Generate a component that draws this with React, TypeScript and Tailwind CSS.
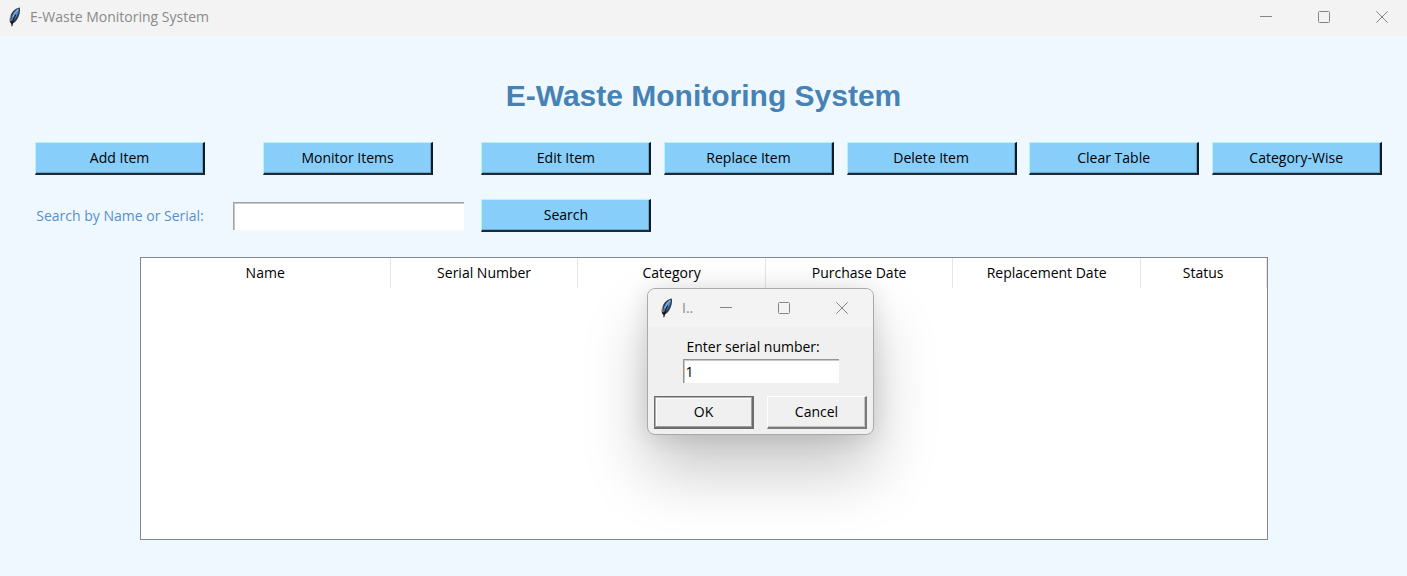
import { useState } from "react";
import type { ReactNode } from "react";

function Feather({ className }: { className: string }) {
  return (
    <svg viewBox="0 0 14 20" className={className} aria-hidden="true">
      <path d="M11.800 .4C8.600 .8 5 3.400 3.200 7c-1.300 2.800-1.900 5.800-1.200 8.600l1.400 1.200c2.600-.4 5-2.800 6.400-5.600 1.700-3.400 2.800-7 2-10.800z" fill="#33373f" />
      <path d="M11 1.500C8.200 2.600 5.800 5 4.400 8.200c-1 2.400-1.400 4.600-1.200 6.600C5.600 13.800 7.600 11.600 9 8.800c1.300-2.600 2.100-4.800 2-7.300z" fill="#4a86cc" />
      <path d="M10.200 2.600C7.800 4.400 6 7 4.900 10" stroke="#86b4e8" strokeWidth="1.300" fill="none" />
      <path d="M2.900 8.200c-.7 2-1 3.800-.7 5.800" stroke="#a8a8a8" strokeWidth=".9" fill="none" />
      <path d="M7.600 7.600C5.600 10.800 4.300 14.600 3.800 19.200" stroke="#15171c" strokeWidth="1.100" fill="none" />
      <path d="M2.200 14.200l3.400 .4-1.600 3.400z" fill="#15171c" />
    </svg>
  );
}

function WindowControls({ label, className }: { label: string; className: string }) {
  const button = "flex h-full w-[58px] items-center justify-center text-[#858585]";
  return (
    <div className={`flex h-full shrink-0 ${className}`}>
      <button type="button" aria-label={`Minimize ${label}`} className={button}>
        <svg viewBox="0 0 12 12" className="size-3">
          <path d="M0 5.500h12" stroke="currentColor" />
        </svg>
      </button>
      <button type="button" aria-label={`Maximize ${label}`} className={button}>
        <svg viewBox="0 0 12 12" className="size-3">
          <rect x=".5" y=".5" width="11" height="11" rx="1" fill="none" stroke="currentColor" />
        </svg>
      </button>
      <button type="button" aria-label={`Close ${label}`} className={button}>
        <svg viewBox="0 0 12 12" className="size-3">
          <path d="M.3 .3l11.400 11.400M11.700 .3L.3 11.700" stroke="currentColor" />
        </svg>
      </button>
    </div>
  );
}

function ActionButton({ children }: { children: ReactNode }) {
  return (
    <button
      type="button"
      className="h-[33px] w-[170px] border-t border-r-2 border-b-2 border-l border-t-[#b4f4ff] border-r-[#101c24] border-b-[#1c2b35] border-l-[#b4f4ff] bg-[#87cefa] text-center text-black shadow-[inset_-1px_-1px_0_#6aa5cc]"
    >
      {children}
    </button>
  );
}

const actions = ["Add Item", "Monitor Items", "Edit Item", "Replace Item", "Delete Item", "Clear Table", "Category-Wise"];

const columns = [
  { name: "Name", width: "w-[22.200%]" },
  { name: "Serial Number", width: "w-[16.660%]" },
  { name: "Category", width: "w-[16.660%]" },
  { name: "Purchase Date", width: "w-[16.660%]" },
  { name: "Replacement Date", width: "w-[16.660%]" },
  { name: "Status", width: "w-[11.160%]" },
];

function SerialDialog() {
  const [serial, setSerial] = useState("1");
  return (
    <div
      role="dialog"
      aria-labelledby="dialog-title"
      className="absolute top-[288px] left-[647px] w-[227px] overflow-hidden rounded-lg border border-[#a9a9a9] bg-[#f0f0f0] shadow-[0_36px_64px_rgba(0,0,0,0.22),0_2px_24px_rgba(0,0,0,0.12)]"
    >
      <div className="flex h-[38px] items-center bg-[#f3f3f3] pl-3">
        <Feather className="h-5 w-3.5 shrink-0" />
        <span id="dialog-title" className="ml-2 min-w-0 flex-1 text-[#8a8a8a]">I..</span>
        <WindowControls label="dialog" className="pr-0.5" />
      </div>
      <form className="px-1.5 pt-2 pb-[5px]" onSubmit={(e) => e.preventDefault()}>
        <div className="mx-auto w-[156px]">
          <label htmlFor="serial" className="block pl-1 leading-6">Enter serial number:</label>
          <input
            id="serial"
            value={serial}
            onChange={(e) => setSerial(e.target.value)}
            className="block h-6 w-full border-t border-l border-t-[#949494] border-l-[#949494] bg-white pl-0.5 shadow-[inset_1px_1px_0_#c8c8c8] outline-none"
          />
        </div>
        <div className="mt-[13px] flex w-full justify-between">
          <button type="submit" className="h-[33px] w-[100px] border-t border-r-2 border-b-2 border-l border-[#6c6c6c] shadow-[inset_1px_1px_0_#b0b0b0,inset_-1px_-1px_0_#a0a0a0,inset_2px_2px_0_#fff]">OK</button>
          <button type="button" className="h-[33px] w-[100px] border-t border-r-2 border-b-2 border-l border-t-white border-r-[#7a7a7a] border-b-[#7a7a7a] border-l-white shadow-[inset_-1px_-1px_0_#c4c4c4]">Cancel</button>
        </div>
      </form>
    </div>
  );
}

export default function App() {
  const [query, setQuery] = useState("");
  return (
    <div className="relative flex min-h-screen flex-col bg-[#f0f8ff] font-['Open_Sans','Noto_Sans',sans-serif] text-sm text-black">
      <header className="flex h-9 items-center overflow-hidden bg-[#f3f3f3] pb-0.5 pl-2">
        <Feather className="h-5 w-3.5 shrink-0" />
        <span className="ml-2 flex-1 text-[#8a8a8a]">E-Waste Monitoring System</span>
        <WindowControls label="window" className="-mr-1" />
      </header>
      <main className="flex flex-1 flex-col px-[19px] pt-10 pb-9">
        <h1 className="text-center font-['Liberation_Sans',Arial,sans-serif] text-[30px] leading-10 font-bold text-[#4682b4]">
          E-Waste Monitoring System
        </h1>
        <div className="mt-[26px] grid grid-cols-[404fr_508fr_365fr_365fr_365fr_365fr_365fr] items-center justify-items-center gap-y-6">
          {actions.map((action) => (
            <ActionButton key={action}>{action}</ActionButton>
          ))}
          <label htmlFor="query" className="text-[#5590cb]">Search by Name or Serial:</label>
          <input
            id="query"
            value={query}
            onChange={(e) => setQuery(e.target.value)}
            className="h-7 w-[231px] border-t border-l border-t-[#a0a3a6] border-l-[#a0a3a6] bg-white px-1 shadow-[inset_1px_1px_0_#c8c8c8] outline-none"
          />
          <ActionButton>Search</ActionButton>
        </div>
        <div className="mx-auto mt-[25px] w-full max-w-[1128px] flex-1 border border-[#828790] bg-white">
          <table className="w-full table-fixed border-collapse">
            <thead>
              <tr className="h-[30px]">
                {columns.map((column) => (
                  <th key={column.name} scope="col" className={`${column.width} border-r border-[#e5e5e5] p-0 font-normal`}>
                    {column.name}
                  </th>
                ))}
              </tr>
            </thead>
          </table>
        </div>
      </main>
      <SerialDialog />
    </div>
  );
}
